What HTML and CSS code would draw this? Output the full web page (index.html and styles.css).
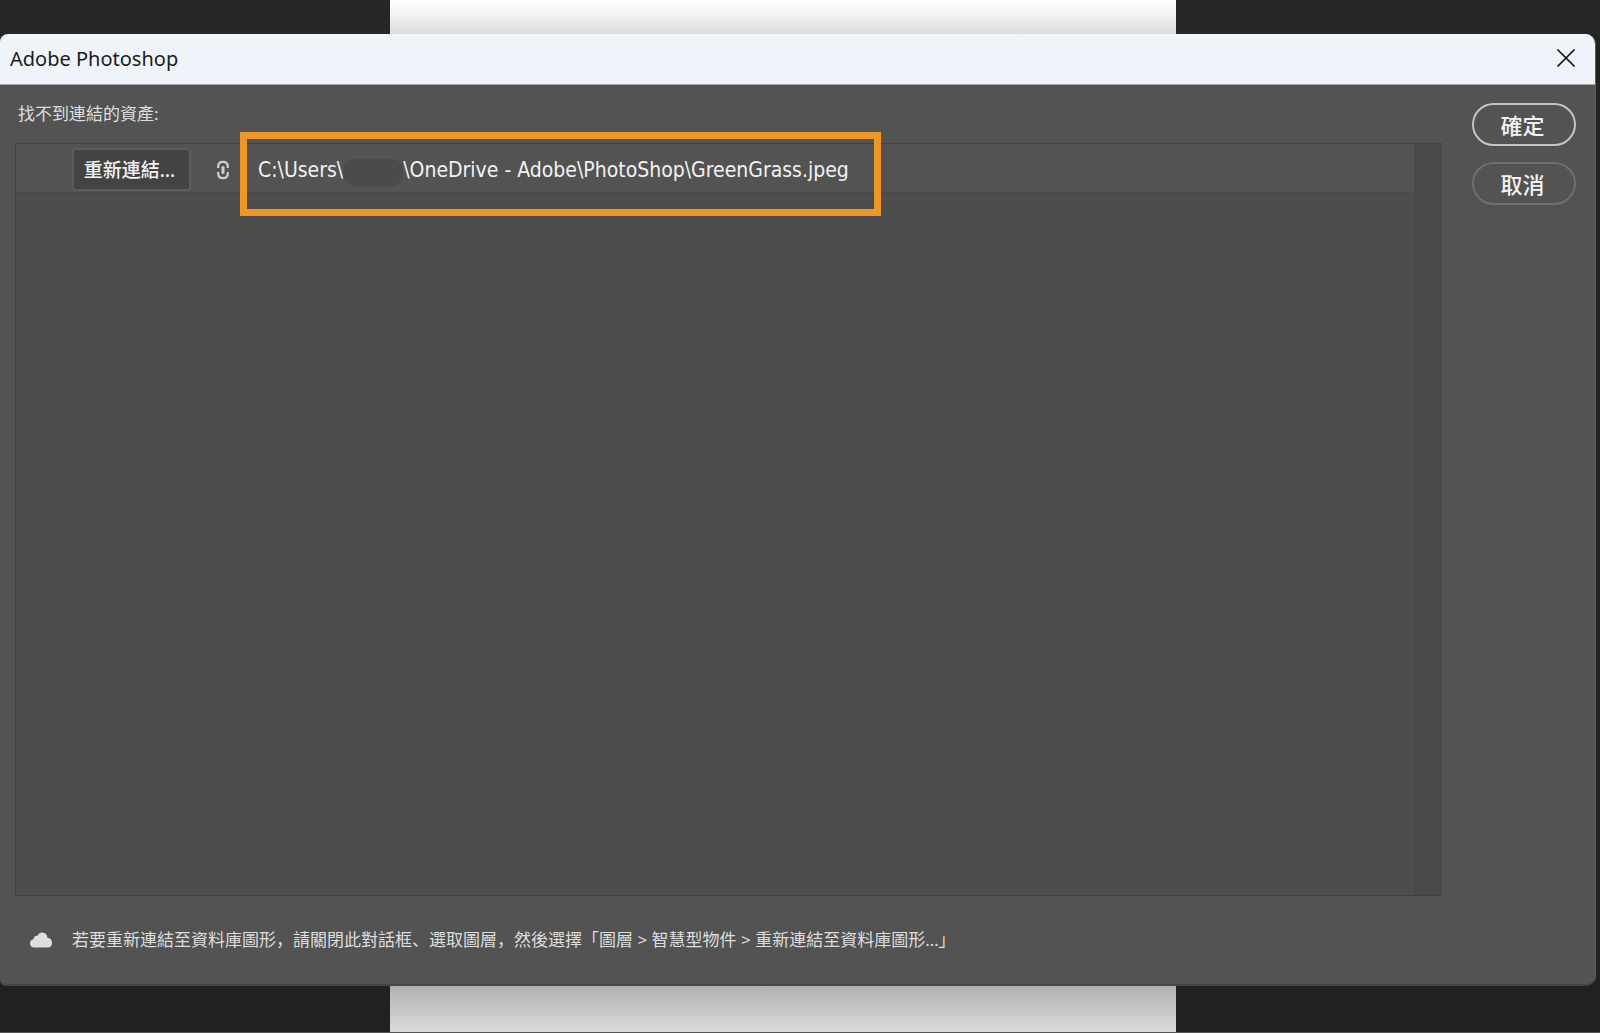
FILE: index.html
```
<!DOCTYPE html>
<html lang="zh">
<head>
  <meta charset="UTF-8">
  <meta name="viewport" content="width=device-width, initial-scale=1.0">
  <title>Adobe Photoshop</title>
  <link rel="stylesheet" href="styles.css">
</head>
<body>
  <div class="strip strip-top"><div class="canvas"></div></div>

  <main class="dialog">
    <header class="titlebar">
      <h1>Adobe Photoshop</h1>
      <button class="close" type="button" aria-label="關閉">
        <svg width="20" height="20" viewBox="0 0 20 20"><path d="M1.5 1.5l17 17M18.5 1.5l-17 17" fill="none" stroke="#111" stroke-width="1.7"/></svg>
      </button>
    </header>

    <div class="content">
      <section class="assets">
        <h2 class="label">找不到連結的資產:</h2>
        <div class="list">
          <div class="rows">
            <div class="row">
              <button class="relink" type="button">重新連結…</button>
              <svg class="link-icon" width="14" height="20" viewBox="0 0 14 20" fill="none" stroke="#d0d0d0">
                <path d="M2.2 8V6.500Q2.200 1.800 7 1.800T11.800 6.500V8M2.200 12v1.500Q2.200 18.200 7 18.200T11.800 13.500V12" stroke-width="2.200"/>
                <path d="M7 7.500v5" stroke-width="3" stroke-linecap="round"/>
              </svg>
              <div class="path"><span>C:\Users\</span><span class="hidden-name"></span><span>\OneDrive - Adobe\PhotoShop\GreenGrass.jpeg</span></div>
            </div>
          </div>
          <div class="scroll-track"></div>
        </div>
      </section>

      <div class="actions">
        <button class="pill pill-main" type="button">確定</button>
        <button class="pill" type="button">取消</button>
      </div>
    </div>

    <footer class="hint">
      <svg width="22" height="16" viewBox="0 0 22 16"><path d="M4.500 15.500Q0 15.500 0 11.300 0 7.800 3.600 7.200 3.800 3.600 7.500 3.800 9 .5 12.500 .5 17 .8 17.300 5.500 22 6.300 22 11 21.800 15.500 17.500 15.500Z" fill="#dedede"/></svg>
      <p>若要重新連結至資料庫圖形，請關閉此對話框、選取圖層，然後選擇「圖層 &gt; 智慧型物件 &gt; 重新連結至資料庫圖形…」</p>
    </footer>
  </main>

  <div class="strip strip-bottom"><div class="canvas"></div></div>
</body>
</html>
```

FILE: styles.css
```
* {
  box-sizing: border-box;
}
body {
  margin: 0;
  min-height: 100vh;
  display: flex;
  flex-direction: column;
  background: #222;
  color: #dedede;
  font-family: "Noto Sans", "Noto Sans CJK TC", sans-serif;
}
h1, h2, p {
  margin: 0;
  font-weight: normal;
}
button {
  font-family: inherit;
  font-weight: 500;
  color: #f2f2f2;
  cursor: pointer;
}
svg {
  display: block;
  flex: none;
}

/* document behind the dialog */
.strip {
  padding: 0 26.5% 0 24.4%;
}
.strip-top {
  height: 34px;
  background: #272727;
}
.strip-bottom {
  height: 47px;
  background: #212121;
  border-bottom: 1px solid #555;
}
.canvas {
  height: 100%;
}
.strip-top .canvas {
  background: linear-gradient(#fff, #f4f4f4 40%, #dcdcdc);
}
.strip-bottom .canvas {
  background: linear-gradient(#b0b0b0, #dcdcdc);
}

.dialog {
  flex: 1;
  display: flex;
  flex-direction: column;
  margin-right: 4px;
  background: #535353;
  border-right: 1px solid #5e5e5e;
  border-bottom: 2px solid #464646;
  border-radius: 8px 10px 10px 6px;
  overflow: hidden;
}
.titlebar {
  display: flex;
  align-items: center;
  justify-content: space-between;
  height: 51px;
  padding: 0 19px 2px 10px;
  background: #eff3fa;
  border-bottom: 1px solid #a4a7aa;
}
.titlebar h1 {
  font-size: 20px;
  color: #1c1c1c;
}
.close {
  padding: 0;
  border: none;
  background: none;
}

.content {
  flex: 1;
  display: flex;
  gap: 30px;
  padding: 18px 19px 0 15px;
}
.assets {
  flex: 1;
  display: flex;
  flex-direction: column;
}
.label {
  height: 40px;
  padding-left: 3px;
  font-size: 17px;
  line-height: 22px;
}
.list {
  flex: 1;
  display: flex;
  background: #4d4d4d;
  border: 1px solid #424242;
  border-right: none;
}
.rows {
  flex: 1;
}
.row {
  display: flex;
  align-items: center;
  height: 49px;
  padding: 3px 0 0 56px;
  background: #535353;
  border-bottom: 1px solid #474747;
}
.relink {
  width: 119px;
  height: 43px;
  padding: 0 4px 0 0;
  border: 2px solid #5c5c5c;
  border-radius: 4px;
  background: #434343;
  font-size: 19px;
  line-height: 36px;
}
.link-icon {
  margin: 0 28px 0 25px;
}
.scroll-track {
  width: 28px;
  background: #494949;
}

.path {
  position: relative;
  display: flex;
  align-items: center;
  height: 32px;
  font-family: "DejaVu Sans Condensed", "Noto Sans", sans-serif;
  font-size: 21px;
  line-height: 32px;
  color: #f2f2f2;
  white-space: nowrap;
}
.path::after {
  content: "";
  position: absolute;
  inset: -22px -32px -30px -18px;
  border: 7px solid #ed9728;
}
.hidden-name {
  align-self: flex-end;
  width: 60px;
  height: 27px;
  border-radius: 12px;
  background: #4b4b4b;
}

.actions {
  display: flex;
  flex-direction: column;
  gap: 16px;
}
.pill {
  width: 104px;
  height: 43px;
  padding: 0 3px 0 0;
  border: 2px solid #707070;
  border-radius: 22px;
  background: none;
  font-size: 22px;
  line-height: 36px;
}
.pill-main {
  border-color: #c4c4c4;
}

.hint {
  display: flex;
  align-items: center;
  gap: 20px;
  height: 88px;
  padding-left: 30px;
}
.hint p {
  padding-bottom: 4px;
  font-size: 17px;
}
```
